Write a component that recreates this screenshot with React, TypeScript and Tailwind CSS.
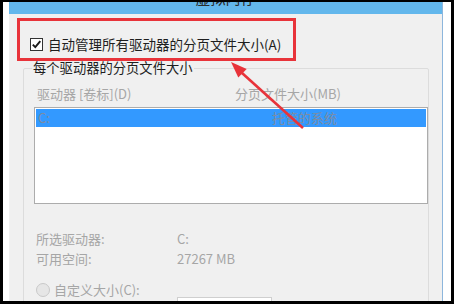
import React from "react";

export default function App() {
  return (
    <div className="relative w-[454px] h-[304px] bg-black pt-[2px] pl-[3px] pr-[3px] pb-[3px] overflow-hidden font-['Noto_Sans_CJK_SC',sans-serif]">
      <div className="w-[448px] h-[299px] bg-white pl-[6px] pr-[8px]">
        <div className="w-[434px] h-[299px] border-r border-[#8db6dc] bg-[#f0f0f0] overflow-hidden flex flex-col">
          {/* title bar */}
          <div className="h-[12px] bg-[#63b7ec] overflow-hidden shrink-0">
            <div className="-mt-[12px] text-center text-[15px] leading-[15px] text-[#2a2a2a]">虚拟内存</div>
          </div>
          {/* content */}
          <div className="flex flex-col">
            <div className="mt-[22px] h-[17px] pl-[21px] flex items-center">
              <div className="w-[13px] h-[13px] border border-[#333333] bg-white flex items-center justify-center">
                <svg width="11" height="11" viewBox="0 0 11 11">
                  <path d="M1.8 5.6 L4.3 8.2 L9.3 2.2" fill="none" stroke="#1a1a1a" strokeWidth="1.9" />
                </svg>
              </div>
              <span className="ml-[5px] text-[13.5px] leading-[17px] text-[#1e1e1e] whitespace-nowrap">自动管理所有驱动器的分页文件大小(A)</span>
            </div>
            <fieldset className="mt-[7px] ml-[14px] w-[406px] h-[260px] border border-[#dcdcdc] rounded-[2px] flex flex-col">
              <legend className="ml-[8px] px-[1px] text-[13.3px] leading-[16px] text-[#1e1e1e] whitespace-nowrap">每个驱动器的分页文件大小</legend>
              <div className="mt-[9px] h-[18px] flex items-center text-[13px] text-[#a6a6a6] whitespace-nowrap">
                <span className="ml-[13px] w-[198px]">驱动器 [卷标](D)</span>
                <span>分页文件大小(MB)</span>
              </div>
              <div className="mt-[4px] ml-[10px] w-[394px] h-[97px] border border-[#acacac] bg-white p-[1px]">
                <div className="h-[18px] bg-[#3399ff] flex items-center text-[13px] text-[#7d8ca2] whitespace-nowrap">
                  <span className="ml-[2px] w-[234px]">C:</span>
                  <span>托管的系统</span>
                </div>
              </div>
              <div className="mt-[25px] ml-[12px] grid grid-cols-[141px_1fr] text-[13px] leading-[20px] text-[#a6a6a6] whitespace-nowrap">
                <span>所选驱动器:</span>
                <span>C:</span>
                <span>可用空间:</span>
                <span>27267 MB</span>
              </div>
              <div className="mt-[13px] ml-[12px] h-[16px] flex items-center text-[13px] text-[#a6a6a6] whitespace-nowrap">
                <div className="w-[14px] h-[14px] rounded-full border border-[#c9c9c9] bg-[#e6e6e6]" />
                <span className="ml-[4px]">自定义大小(C):</span>
              </div>
              <div className="-mt-[1px] ml-[153px] w-[95px] h-[22px] border border-[#cfcfcf] bg-white" />
            </fieldset>
          </div>
        </div>
      </div>
      {/* annotations */}
      <div className="absolute left-[17px] top-[18px] w-[279px] h-[43px] border-[3px] border-[#e8333a]" />
      <svg className="absolute left-0 top-0" width="454" height="304" viewBox="0 0 454 304">
        <line x1="242" y1="73" x2="303" y2="128" stroke="#e8333a" strokeWidth="2.6" />
        <polygon points="231,62 238.3,77.5 246.7,68.9" fill="#e8333a" />
      </svg>
    </div>
  );
}
